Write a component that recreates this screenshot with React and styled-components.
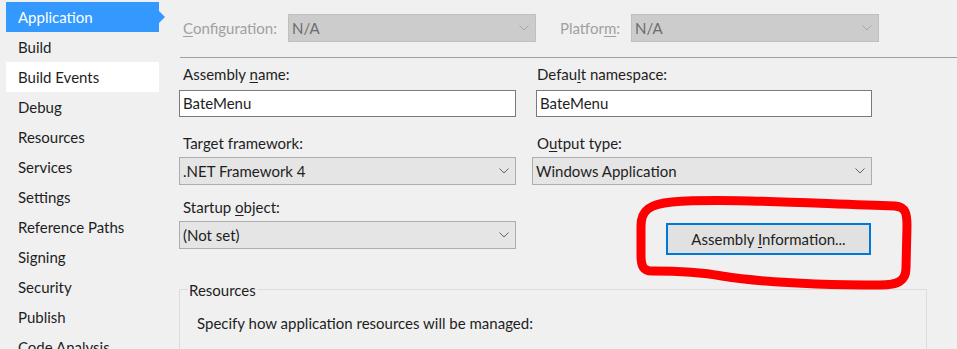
import React from "react";
import styled, { createGlobalStyle } from "styled-components";

const Global = createGlobalStyle`
  html, body { margin: 0; padding: 0; background: #f0f0f0; }
  body { font-family: "Lato", "Noto Sans", sans-serif; font-size: 15px; color: #1e1e1e; }
  #root { width: 957px; height: 349px; overflow: hidden; }
`;

const Page = styled.div`
  position: relative;
  display: flex;
  width: 957px;
  height: 349px;
  overflow: hidden;
  background: #f0f0f0;
`;

const Sidebar = styled.nav`
  width: 179px;
  flex: none;
  padding: 2px 0 0 6px;
  box-sizing: border-box;
  display: flex;
  flex-direction: column;
`;

const NavItem = styled.div`
  position: relative;
  width: 153px;
  height: 30px;
  line-height: 30px;
  padding-left: 12px;
  box-sizing: border-box;
  white-space: nowrap;
  background: ${(p) => (p.$selected ? "#3399ff" : p.$hover ? "#ffffff" : "transparent")};
  color: ${(p) => (p.$selected ? "#ffffff" : "#1e1e1e")};
  &::after {
    content: "";
    display: ${(p) => (p.$selected ? "block" : "none")};
    position: absolute;
    right: -6px;
    top: 9px;
    border-top: 6px solid transparent;
    border-bottom: 6px solid transparent;
    border-left: 6px solid #3399ff;
  }
`;

const Main = styled.main`
  flex: 1;
  display: flex;
  flex-direction: column;
`;

const TopBar = styled.div`
  display: flex;
  align-items: center;
  height: 28px;
  margin-top: 14px;
  padding-left: 4px;
`;

const DimLabel = styled.span`
  color: #a0a0a0;
  width: ${(p) => p.$w}px;
  flex: none;
`;

const Select = styled.div`
  position: relative;
  box-sizing: border-box;
  width: ${(p) => p.$w}px;
  height: ${(p) => p.$h || 28}px;
  margin-left: ${(p) => p.$ml || 0}px;
  border: 1px solid ${(p) => (p.$disabled ? "#bfbfbf" : "#adadad")};
  background: ${(p) => (p.$disabled ? "#cccccc" : "#e5e5e5")};
  color: ${(p) => (p.$disabled ? "#6d6d6d" : "#1e1e1e")};
  display: flex;
  align-items: center;
  padding-left: 3px;
  flex: none;
`;

const Chevron = styled.svg`
  position: absolute;
  right: 6px;
  top: 50%;
  margin-top: -3px;
`;

const Spacer = styled.span`
  width: ${(p) => p.$w}px;
  flex: none;
`;

const Divider = styled.div`
  height: 1px;
  background: #a0a0a0;
  margin: 15px 0 0 1px;
`;

const FormRow = styled.div`
  display: flex;
  gap: 16px;
  margin-top: ${(p) => p.$mt}px;
`;

const Cell = styled.div`
  width: ${(p) => p.$w}px;
  flex: none;
  display: flex;
  flex-direction: column;
  align-items: flex-start;
`;

const Label = styled.div`
  line-height: 20px;
  height: 20px;
  padding-left: ${(p) => p.$pl ?? 4}px;
  margin-bottom: ${(p) => p.$mb}px;
  white-space: nowrap;
`;

const TextInput = styled.div`
  box-sizing: border-box;
  width: ${(p) => p.$w}px;
  height: 27px;
  margin-left: ${(p) => p.$ml || 0}px;
  border: 1px solid #7a7a7a;
  background: #ffffff;
  display: flex;
  align-items: center;
  padding-left: 3px;
`;

const Button = styled.div`
  box-sizing: border-box;
  width: 205px;
  height: 32px;
  margin: 26px 0 0 134px;
  border: 2px solid #0078d7;
  background: #e1e1e1;
  display: flex;
  align-items: center;
  justify-content: center;
  white-space: pre;
`;

const GroupBox = styled.fieldset`
  margin: 25px 0 0 0;
  width: 748px;
  height: 100px;
  box-sizing: border-box;
  border: 1px solid #dcdcdc;
  border-bottom: none;
  padding: 14px 0 0 0;
  min-width: 0;
  & > legend {
    padding: 0 1px;
    margin-left: 8px;
    line-height: 20px;
  }
`;

const GroupText = styled.div`
  padding-left: 17px;
`;

const U = styled.span`
  text-decoration: underline;
  text-underline-offset: 2px;
`;

const Annotation = styled.svg`
  position: absolute;
  left: 0;
  top: 0;
  pointer-events: none;
`;

const Chev = ({ dim }) => (
  <Chevron width="10" height="6" viewBox="0 0 10 6">
    <path d="M0.5 0.5 L5 5 L9.5 0.5" fill="none" stroke={dim ? "#a6a6a6" : "#606060"} strokeWidth="1" />
  </Chevron>
);

const items = [
  "Application", "Build", "Build Events", "Debug", "Resources", "Services",
  "Settings", "Reference Paths", "Signing", "Security", "Publish", "Code Analysis",
];

export default function App() {
  return (
    <Page>
      <Global />
      <Sidebar>
        {items.map((t, i) => (
          <NavItem key={t} $selected={i === 0} $hover={i === 2}>{t}</NavItem>
        ))}
      </Sidebar>
      <Main>
        <TopBar>
          <DimLabel $w={105}><U>C</U>onfiguration:</DimLabel>
          <Select $w={248} $disabled>N/A<Chev dim /></Select>
          <Spacer $w={24} />
          <DimLabel $w={71}>Platfor<U>m</U>:</DimLabel>
          <Select $w={248} $disabled>N/A<Chev dim /></Select>
        </TopBar>
        <Divider />
        <FormRow $mt={6}>
          <Cell $w={337}>
            <Label $mb={6}>Assembly <U>n</U>ame:</Label>
            <TextInput $w={337}>BateMenu</TextInput>
          </Cell>
          <Cell $w={340}>
            <Label $mb={6} $pl={5}>Defau<U>l</U>t namespace:</Label>
            <TextInput $w={336} $ml={4}>BateMenu</TextInput>
          </Cell>
        </FormRow>
        <FormRow $mt={16}>
          <Cell $w={337}>
            <Label $mb={4}>Tar<U>g</U>et framework:</Label>
            <Select $w={337}>.NET Framework 4<Chev /></Select>
          </Cell>
          <Cell $w={340}>
            <Label $mb={4} $pl={5}>O<U>u</U>tput type:</Label>
            <Select $w={340}>Windows Application<Chev /></Select>
          </Cell>
        </FormRow>
        <FormRow $mt={12}>
          <Cell $w={337}>
            <Label $mb={4}>Startup <U>o</U>bject:</Label>
            <Select $w={337}>(Not set)<Chev /></Select>
          </Cell>
          <Cell $w={340}>
            <Button><span>Assembly <U>I</U>nformation...</span></Button>
          </Cell>
        </FormRow>
        <GroupBox>
          <legend>Resources</legend>
          <GroupText>Specify how application resources will be managed:</GroupText>
        </GroupBox>
      </Main>
      <Annotation width="957" height="349" viewBox="0 0 957 349">
        <path
          d="M 641 226 C 641 210, 650 204, 672 202 C 720 198, 800 203, 895 206 C 906 207, 907 214, 907 226 L 906 268 C 906 281, 898 285, 880 285 C 820 285, 760 282, 722 276 C 700 272, 680 271, 652 271 C 643 271, 641 266, 641 255 Z"
          fill="none"
          stroke="#ff0000"
          strokeWidth="9"
          strokeLinejoin="round"
          strokeLinecap="round"
        />
      </Annotation>
    </Page>
  );
}
